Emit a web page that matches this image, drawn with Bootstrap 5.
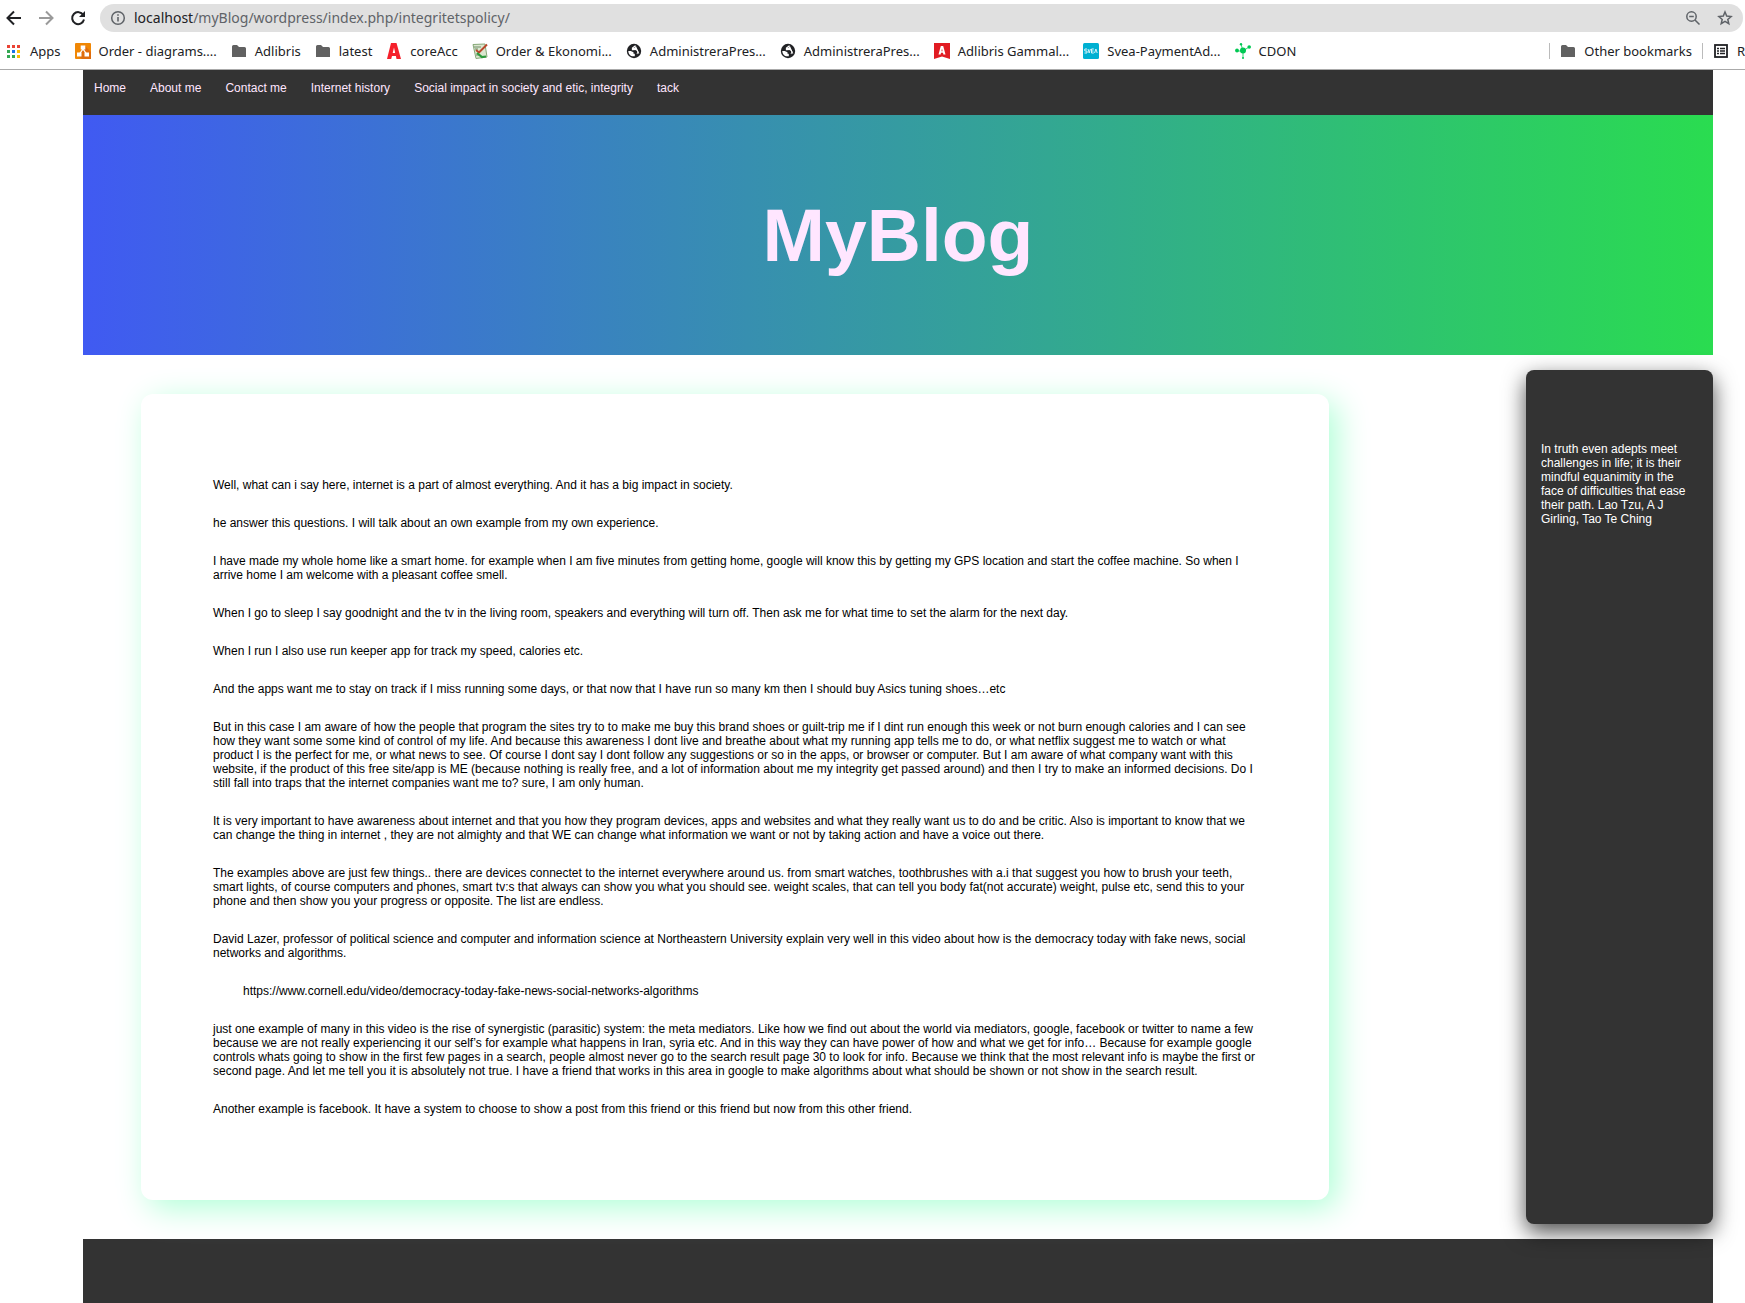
<!DOCTYPE html>
<html lang="sv">
<head>
<meta charset="utf-8">
<meta name="viewport" content="width=device-width, initial-scale=1">
<title>MyBlog</title>
<link href="https://cdn.jsdelivr.net/npm/bootstrap@5.3.0/dist/css/bootstrap.min.css" rel="stylesheet">
<style>
  body { background: #fff; color: #000; font: 12px/14px "Liberation Sans", Arial, sans-serif; }
  .browser-ui { font-family: "Noto Sans", sans-serif; height: 70px; border-bottom: 1px solid #aaa; color: #202124; overflow: hidden; }
  .browser-ui button { border: 0; background: none; padding: 0; display: flex; }
  .browser-ui svg { flex: none; display: block; }
  .tool-row { height: 36px; padding: 0 2px 0 4px; }
  .tool-nav { gap: 12px; margin-right: 12px; }
  .address { background: #e0e0e0; height: 28px; padding: 0 10px 0 9px; position: relative; }
  .address input { position: absolute; inset: 0; width: 100%; padding: 0 90px 0 34px; border: 0; background: none; color: transparent; font-size: 14px; line-height: 28px; height: 28px; }
  .address-text { font-size: 14px; line-height: 28px; color: #5f6368; padding-left: 7px; }
  .address-text b { font-weight: 400; color: #202124; }
  .marks-row { height: 29px; padding-left: 6px; gap: 14px; font-size: 13px; line-height: 18px; white-space: nowrap; }
  .marks-row a { color: #202124; text-decoration: none; display: flex; align-items: center; gap: 8px; flex: none; }
  .divider { width: 1px; height: 16px; background: #bbb; flex: none; }
  .marks-end { gap: 10px; flex: none; }

  .site { margin: 0 32px 0 83px; }
  .site-nav { background: #333; min-height: 45px; padding: 11px 0 0; }
  .site-nav .nav-link { color: #ffe6ff; padding: 0 13px 0 11px; }
  .hero { min-height: 240px; background: linear-gradient(90deg, #405af2, #2adc50); }
  .hero h1 { font-size: 75px; line-height: 86px; font-weight: 700; color: #ffe6ff; margin: 0; }
  .content-row { padding: 15px 0; }
  .post { margin: 24px 0 24px 58px; width: 1188px; padding: 84px 72px; background: #fff; border-radius: 12px; box-shadow: 8px 8px 32px #afffd6; }
  .post p { margin: 0 0 24px; }
  .post p:last-child { margin: 0; }
  .post .indent { padding-left: 30px; }
  .quote-bar { width: 187px; padding: 72px 15px; background: #333; color: #fff; border-radius: 8px; box-shadow: 0 8px 22px rgba(0,0,0,.7); }
  .site-foot { background: #333; min-height: 64px; }
</style>
</head>
<body>
<svg class="d-none" xmlns="http://www.w3.org/2000/svg">
  <symbol id="folder" viewBox="0 0 16 16"><path d="M1 3.500Q1 2 2.500 2H6l2 2h5.500Q15 4 15 5.500V14H1z" fill="#616161"/></symbol>
  <symbol id="globe" viewBox="0 0 16 16"><circle cx="8" cy="8" r="7.200" fill="#202124"/><path d="M2.300 8h2.500l2.700 1.200v1.600h1.300v2.400C5 14 2.300 11.500 2.300 8zM9.600 2.300v1.500L8 5H6.300v2h3.800l1.600 1.500v2h1.600M6 3.500L4.500 5" fill="#fff"/><path d="M9.500 2.800L6.500 5v1.500h3.700l1.500 2-1 2.500" fill="none" stroke="#fff" stroke-width="1.300"/><path d="M7.500 7.500h2.800l1 1.500-1 2.500-1.500-1z" fill="#202124"/></symbol>
</svg>

<header class="browser-ui">
  <div class="tool-row d-flex align-items-center">
    <div class="tool-nav d-flex">
      <button type="button" aria-label="Back"><svg width="20" height="20" viewBox="0 0 20 20" fill="none" stroke="#202124" stroke-width="2"><path d="M17 10H4M10 3.500L3.500 10l6.500 6.500"/></svg></button>
      <button type="button" aria-label="Forward"><svg width="20" height="20" viewBox="0 0 20 20" fill="none" stroke="#9a9a9a" stroke-width="2"><path d="M3 10h13M10 3.500l6.500 6.500-6.500 6.500"/></svg></button>
      <button type="button" aria-label="Reload"><svg width="20" height="20" viewBox="0 0 20 20"><path d="M15.300 7A6 6 0 1 0 16 11.500" fill="none" stroke="#202124" stroke-width="2"/><path d="M17 3v6h-6z" fill="#202124"/></svg></button>
    </div>
    <div class="address rounded-pill flex-grow-1 d-flex align-items-center">
      <svg width="18" height="18" viewBox="0 0 18 18"><circle cx="9" cy="9" r="6.300" fill="none" stroke="#5f6368" stroke-width="1.500"/><path d="M9 8v4.500M9 5.200v1.600" stroke="#5f6368" stroke-width="1.600"/></svg>
      <span class="address-text"><b>localhost</b>/myBlog/wordpress/index.php/integritetspolicy/</span>
      <input type="text" aria-label="Address">
      <div class="ms-auto d-flex gap-3 position-relative">
        <button type="button" aria-label="Zoom"><svg width="16" height="16" viewBox="0 0 16 16" fill="none" stroke="#5f6368" stroke-width="1.500"><circle cx="6.500" cy="6.500" r="4.700"/><path d="M10 10l4.500 4.500M4.200 6.500h4.600"/></svg></button>
        <button type="button" aria-label="Bookmark"><svg width="16" height="16" viewBox="0 0 16 16" fill="none" stroke="#5f6368" stroke-width="1.500"><path d="M8 2l1.700 4.100 4.400.4-3.300 2.900 1 4.300L8 11.400l-3.800 2.300 1-4.300-3.300-2.900 4.400-.4z"/></svg></button>
      </div>
    </div>
  </div>
  <nav class="marks-row d-flex align-items-center" aria-label="Bookmarks">
    <a href="#"><svg width="16" height="16" viewBox="0 0 16 16"><path d="M1 2h3v3H1zM6 2h3v3H6zM11 2h3v3h-3z" fill="#ea4335"/><path d="M1 7h3v3H1zM1 12h3v3H1zM6 12h3v3H6z" fill="#34a853"/><path d="M6 7h3v3H6z" fill="#1a73e8"/><path d="M11 7h3v3h-3zM11 12h3v3h-3z" fill="#fbbc04"/></svg>Apps</a>
    <a href="#"><svg width="16" height="16" viewBox="0 0 16 16"><rect width="16" height="16" rx="1" fill="#f08705"/><path d="M10 3l6 6v7H7l-4-3z" fill="#df6c0c"/><path d="M8 6l-3.500 5M8 6l3.500 5" stroke="#fff" stroke-width="1.300"/><path d="M5.700 2.500h4.600v4H5.700zM2 9.500h4.500v4H2zM9.500 9.500H14v4H9.500z" fill="#fff"/></svg>Order - diagrams....</a>
    <a href="#"><svg width="16" height="16"><use href="#folder"/></svg>Adlibris</a>
    <a href="#"><svg width="16" height="16"><use href="#folder"/></svg>latest</a>
    <a href="#"><svg width="16" height="16" viewBox="0 0 16 16"><path d="M5 0h5.500L15 16h-4.500l-.6-3H6l-.8 3H1zM8 4.500L6.700 10h2.500z" fill="#f5202b"/></svg>coreAcc</a>
    <a href="#"><svg width="16" height="16" viewBox="0 0 16 16"><path d="M1 1.500L13 1l2 13-11 1.500z" fill="#dbe6cf" stroke="#86a878"/><path d="M2 4h7M3 6h3M4 12h3" stroke="#6f8f68"/><path d="M4 7l3 2.500L15 1.500" stroke="#b8472a" stroke-width="2" fill="none"/><path d="M5 10l5 4 4-.5" stroke="#2c9a3c" stroke-width="2.200" fill="none"/></svg>Order &amp; Ekonomi...</a>
    <a href="#"><svg width="16" height="16"><use href="#globe"/></svg>AdministreraPres...</a>
    <a href="#"><svg width="16" height="16"><use href="#globe"/></svg>AdministreraPres...</a>
    <a href="#"><svg width="16" height="16" viewBox="0 0 16 16"><path d="M0 0h16v16l-8-2.500L0 16z" fill="#e11b22"/><path d="M6.800 3h2.400l2.300 8.500H9.400L9 9.800H7l-.4 1.700H4.500zM8 5.500l-.6 2.700h1.200z" fill="#fff"/></svg>Adlibris Gammal...</a>
    <a href="#"><svg width="16" height="16" viewBox="0 0 16 16"><rect width="16" height="16" rx="1.500" fill="#00b0d2"/><path d="M4 6H1.800v2H4v2H1.500M5 6l1.200 4 1.200-4M10.800 6H8.500v4h2.300M8.500 8h2M11.600 10l1.300-4 1.300 4" fill="none" stroke="#d8f4fa"/></svg>Svea-PaymentAd...</a>
    <a href="#"><svg width="16" height="16" viewBox="0 0 16 16" fill="#00c853"><path d="M2 8h6l6-4M6 1l2 7v7" fill="none" stroke="#00c853" stroke-width=".8"/><circle cx="8" cy="7.500" r="3"/><circle cx="2" cy="7.500" r="1.900"/><circle cx="14.200" cy="4" r="1.800"/><circle cx="6" cy="1.200" r="1.200"/><circle cx="8" cy="15" r="1"/></svg>CDON</a>
    <div class="marks-end ms-auto d-flex align-items-center">
      <span class="divider"></span>
      <a href="#"><svg width="16" height="16"><use href="#folder"/></svg>Other bookmarks</a>
      <span class="divider"></span>
      <a href="#"><svg width="16" height="16" viewBox="0 0 16 16" fill="none" stroke="#202124"><rect x="2" y="2" width="12" height="12" stroke-width="1.800"/><path d="M4 5.500h2M7 5.500h5M4 8h2M7 8h5M4 10.500h2M7 10.500h5" stroke-width="1.400"/></svg>R</a>
    </div>
  </nav>
</header>

<div class="site">
  <nav class="site-nav" aria-label="Main">
    <div class="nav">
      <a class="nav-link" href="#">Home</a>
      <a class="nav-link" href="#">About me</a>
      <a class="nav-link" href="#">Contact me</a>
      <a class="nav-link" href="#">Internet history</a>
      <a class="nav-link" href="#">Social impact in society and etic, integrity</a>
      <a class="nav-link" href="#">tack</a>
    </div>
  </nav>
  <div class="hero d-flex align-items-center justify-content-center"><h1>MyBlog</h1></div>
  <div class="content-row d-flex justify-content-between">
    <main class="post">
      <p>Well, what can i say here, internet is a part of almost everything. And it has a big impact in society.</p>
      <p>he answer this questions. I will talk about an own example from my own experience.</p>
      <p>I have made my whole home like a smart home. for example when I am five minutes from getting home, google will know this by getting my GPS location and start the coffee machine. So when I arrive home I am welcome with a pleasant coffee smell.</p>
      <p>When I go to sleep I say goodnight and the tv in the living room, speakers and everything will turn off. Then ask me for what time to set the alarm for the next day.</p>
      <p>When I run I also use run keeper app for track my speed, calories etc.</p>
      <p>And the apps want me to stay on track if I miss running some days, or that now that I have run so many km then I should buy Asics tuning shoes…etc</p>
      <p>But in this case I am aware of how the people that program the sites try to to make me buy this brand shoes or guilt-trip me if I dint run enough this week or not burn enough calories and I can see how they want some some kind of control of my life. And because this awareness I dont live and breathe about what my running app tells me to do, or what netflix suggest me to watch or what product I is the perfect for me, or what news to see. Of course I dont say I dont follow any suggestions or so in the apps, or browser or computer. But I am aware of what company want with this website, if the product of this free site/app is ME (because nothing is really free, and a lot of information about me my integrity get passed around) and then I try to make an informed decisions. Do I still fall into traps that the internet companies want me to? sure, I am only human.</p>
      <p>It is very important to have awareness about internet and that you how they program devices, apps and websites and what they really want us to do and be critic. Also is important to know that we can change the thing in internet , they are not almighty and that WE can change what information we want or not by taking action and have a voice out there.</p>
      <p>The examples above are just few things.. there are devices connectet to the internet everywhere around us. from smart watches, toothbrushes with a.i that suggest you how to brush your teeth, smart lights, of course computers and phones, smart tv:s that always can show you what you should see. weight scales, that can tell you body fat(not accurate) weight, pulse etc, send this to your phone and then show you your progress or opposite. The list are endless.</p>
      <p>David Lazer, professor of political science and computer and information science at Northeastern University explain very well in this video about how is the democracy today with fake news, social networks and algorithms.</p>
      <p class="indent">https://www.cornell.edu/video/democracy-today-fake-news-social-networks-algorithms</p>
      <p>just one example of many in this video is the rise of synergistic (parasitic) system: the meta mediators. Like how we find out about the world via mediators, google, facebook or twitter to name a few because we are not really experiencing it our self’s for example what happens in Iran, syria etc. And in this way they can have power of how and what we get for info… Because for example google controls whats going to show in the first few pages in a search, people almost never go to the search result page 30 to look for info. Because we think that the most relevant info is maybe the first or second page. And let me tell you it is absolutely not true. I have a friend that works in this area in google to make algorithms about what should be shown or not show in the search result.</p>
      <p>Another example is facebook. It have a system to choose to show a post from this friend or this friend but now from this other friend.</p>
    </main>
    <aside class="quote-bar">In truth even adepts meet challenges in life; it is their mindful equanimity in the face of difficulties that ease their path. Lao Tzu, A J Girling, Tao Te Ching</aside>
  </div>
  <footer class="site-foot"></footer>
</div>
<script src="https://cdn.jsdelivr.net/npm/bootstrap@5.3.0/dist/js/bootstrap.bundle.min.js"></script>
</body>
</html>
